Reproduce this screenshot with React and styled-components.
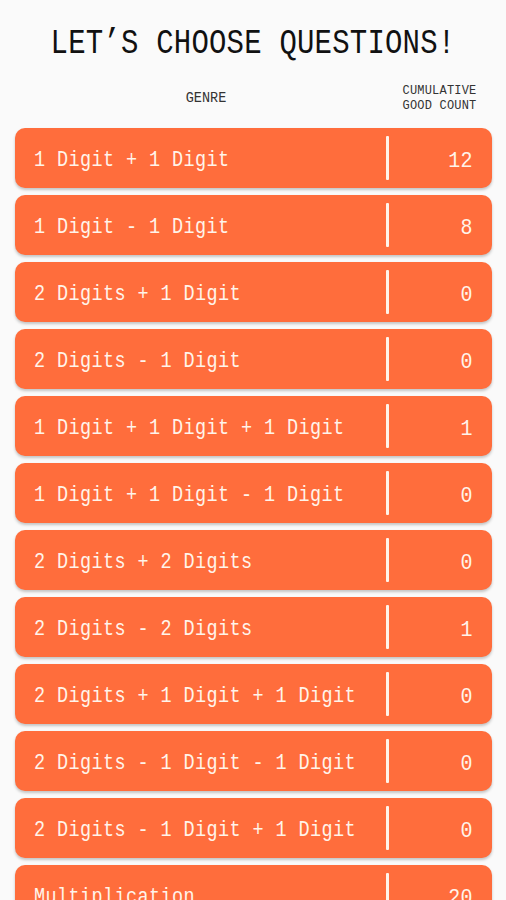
import React from 'react'
import styled, { createGlobalStyle } from 'styled-components'

const GlobalStyle = createGlobalStyle`
    html, body {
        margin: 0;
        padding: 0;
        background: #fafafa;
        overflow: hidden;
    }
`

const Page = styled.div`
    width: 506px;
    height: 900px;
    background: #fafafa;
    font-family: "Liberation Mono", "DejaVu Sans Mono", monospace;
    overflow: hidden;
`

const Title = styled.h1`
    margin: 0;
    padding-top: 26px;
    height: 46px;
    text-align: center;
    font-family: "Liberation Mono", monospace;
    font-weight: normal;
    font-size: 29px;
    line-height: 34px;
    letter-spacing: 0.2px;
    color: #111;
    transform: scaleY(1.2);
`

const Header = styled.div`
    display: flex;
    align-items: center;
    margin: 7px 14px 0 15px;
    height: 38px;
    color: #333;
    transform: scaleY(1.12);
`

const GenreHead = styled.div`
    flex: 1;
    text-align: center;
    font-size: 13.5px;
    padding-left: 10px;
`

const CountHead = styled.div`
    width: 105px;
    text-align: center;
    font-size: 12px;
    line-height: 14px;
    letter-spacing: 0.2px;
`

const List = styled.div`
    display: flex;
    flex-direction: column;
    gap: 7px;
    margin: 11px 14px 0 15px;
`

const Row = styled.div`
    display: flex;
    align-items: center;
    height: 60px;
    flex-shrink: 0;
    border-radius: 10px;
    background: #ff6d3c;
    box-shadow: 0 2px 3px rgba(0, 0, 0, 0.22);
    color: #fff4ea;
    font-size: 18.5px;
    letter-spacing: 0.4px;
`

const Genre = styled.div`
    flex: 1;
    padding-left: 19px;
    padding-top: 4px;
    white-space: nowrap;
    transform: scaleY(1.18);
`

const Divider = styled.div`
    width: 3px;
    height: 44px;
    background: #fff4ea;
    border-radius: 1px;
`

const Count = styled.div`
    width: 84px;
    padding-right: 19px;
    padding-top: 4px;
    text-align: right;
    font-size: 20px;
    transform: scaleY(1.12);
`

const rows = [
    ['1 Digit + 1 Digit', 12],
    ['1 Digit - 1 Digit', 8],
    ['2 Digits + 1 Digit', 0],
    ['2 Digits - 1 Digit', 0],
    ['1 Digit + 1 Digit + 1 Digit', 1],
    ['1 Digit + 1 Digit - 1 Digit', 0],
    ['2 Digits + 2 Digits', 0],
    ['2 Digits - 2 Digits', 1],
    ['2 Digits + 1 Digit + 1 Digit', 0],
    ['2 Digits - 1 Digit - 1 Digit', 0],
    ['2 Digits - 1 Digit + 1 Digit', 0],
    ['Multiplication', 20],
]

const App = () => {
    return (
        <Page>
            <GlobalStyle />
            <Title>LET’S CHOOSE QUESTIONS!</Title>
            <Header>
                <GenreHead>GENRE</GenreHead>
                <CountHead>CUMULATIVE<br />GOOD COUNT</CountHead>
            </Header>
            <List>
                {rows.map(([genre, count]) => (
                    <Row key={genre}>
                        <Genre>{genre}</Genre>
                        <Divider />
                        <Count>{count}</Count>
                    </Row>
                ))}
            </List>
        </Page>
    )
}

export default App
